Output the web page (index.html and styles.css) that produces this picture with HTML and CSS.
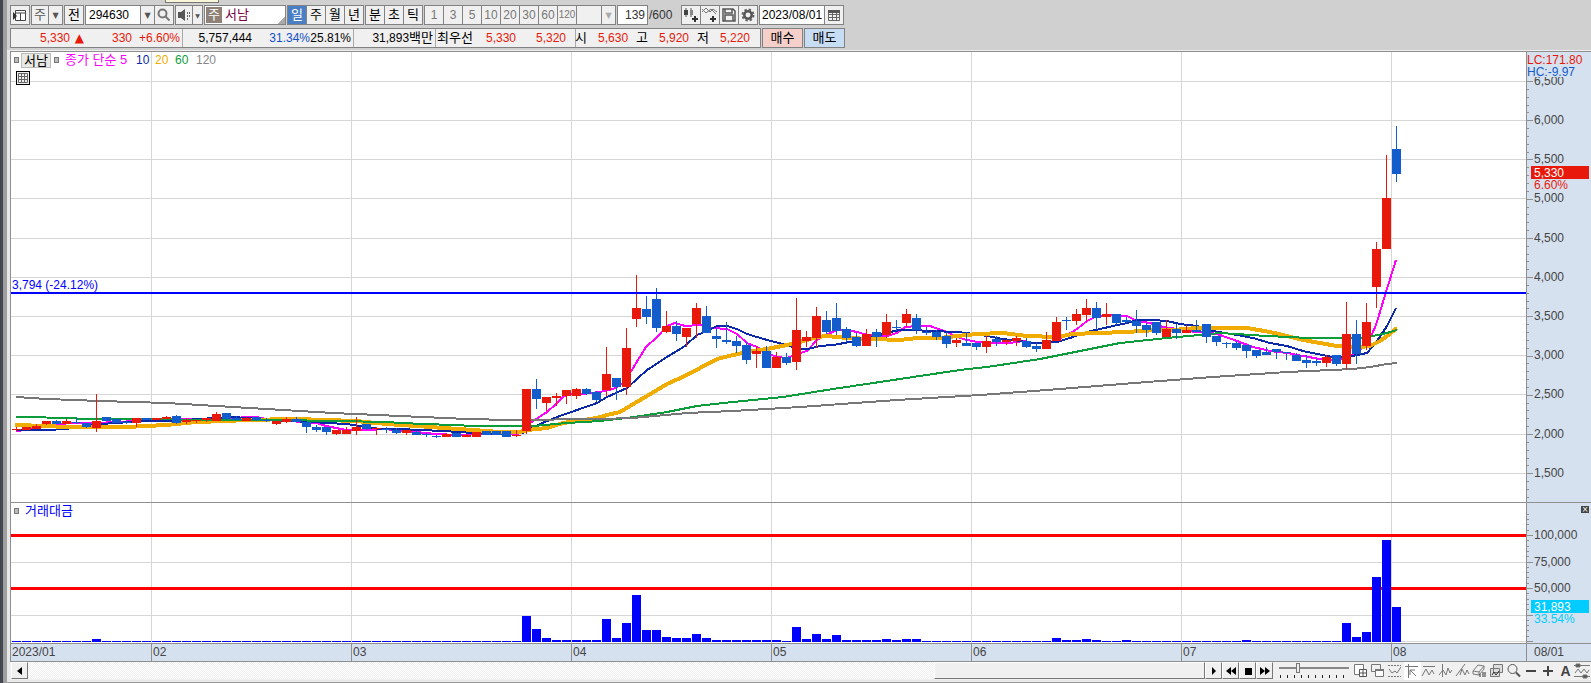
FILE: index.html
```html
<!DOCTYPE html>
<html lang="ko">
<head>
<meta charset="utf-8">
<title>서남 294630</title>
<link rel="stylesheet" href="styles.css">
</head>
<body>
<div class="edge"></div>
<main class="window">
  <header class="toolbar">
    <span class="tab-peek"></span>
    <div class="row">
      <button class="btn" aria-label="패널"><svg width="16" height="16"><path d="M3.500 3.500h10v10h-10zM3.500 6h10M8.500 6v7" fill="#fff" stroke="#444"/><path d="M1 5v8l4-4z" fill="#333"/></svg></button>
      <div class="combo"><button class="btn plain">주</button><button class="btn arrow" aria-label="열기">▼</button></div>
      <button class="btn">전</button>
      <div class="combo"><input class="field code" aria-label="종목코드" value="294630"><button class="btn arrow" aria-label="목록">▼</button><button class="btn" aria-label="검색"><svg width="16" height="16"><circle cx="6.500" cy="6.500" r="4" fill="none" stroke="#777" stroke-width="2"/><path d="M9.500 9.500l4 4" stroke="#777" stroke-width="2"/></svg></button></div>
      <div class="combo"><button class="btn plain" aria-label="소리"><svg width="16" height="16"><path d="M2 5h3l4-3v12l-4-3H2z" fill="#555"/><path d="M11 6h1M11 9h1M13 6h1M13 9h1M11 12h1" stroke="#666" stroke-width="2"/></svg></button><button class="btn arrow slim" aria-label="소리 설정">▼</button></div>
      <div class="stock"><b class="badge">주</b><span>서남</span></div>
      <div class="combo"><button class="btn on">일</button><button class="btn">주</button><button class="btn">월</button><button class="btn">년</button></div>
      <div class="combo"><button class="btn">분</button><button class="btn">초</button><button class="btn">틱</button></div>
      <div class="combo dim"><button class="btn">1</button><button class="btn">3</button><button class="btn">5</button><button class="btn">10</button><button class="btn">20</button><button class="btn">30</button><button class="btn">60</button><button class="btn small">120</button><button class="btn blank" aria-label="분 주기"></button><button class="btn arrow" aria-label="분 목록">▼</button></div>
      <div class="count"><input class="field num" aria-label="표시 개수" value="139"><span>/600</span></div>
      <div class="combo">
        <button class="btn" aria-label="차트 추가"><svg width="18" height="18"><path d="M4 2v9M9 2v9" stroke="#555"/><path d="M2 4h4v5H2z" fill="#444"/><path d="M8 4h3v5H8z" fill="#888"/><path d="M13 10v6M10 13h6" stroke="#333" stroke-width="2"/></svg></button>
        <button class="btn" aria-label="지표 추가"><svg width="18" height="18"><path d="M1 6l4-4 4 4 3-3 4 3M1 3l4 4 5-4 5 5" fill="none" stroke="#777"/><path d="M12 10v6M9 13h6" stroke="#333" stroke-width="2"/></svg></button>
        <button class="btn" aria-label="저장"><svg width="18" height="18"><path d="M3 3h10l2 2v10H3zM5 3v4h7V3M5 15V9h8v6" fill="none" stroke="#555" stroke-width="1.500"/></svg></button>
        <button class="btn" aria-label="설정"><svg width="18" height="18"><circle cx="9" cy="9" r="5.500" fill="none" stroke="#666" stroke-width="2" stroke-dasharray="2.400 1.920"/><circle cx="9" cy="9" r="3.700" fill="none" stroke="#555" stroke-width="2.500"/></svg></button>
      </div>
      <div class="combo"><input class="field date" aria-label="날짜" value="2023/08/01"><button class="btn" aria-label="달력"><svg width="16" height="16"><path d="M2.500 4.500h11v9h-11zM2.500 7.500h11M2.500 10.500h11M6.500 5v8M10.500 5v8" fill="none" stroke="#666"/><path d="M2 3h12v3H2z" fill="#555"/></svg></button></div>
    </div>
    <div class="row">
      <div class="quotes">
        <div class="cell c1"><span class="up">5,330</span><span class="tri">▲</span><span class="up">330</span><span class="up">+6.60%</span></div>
        <div class="cell c2"><span>5,757,444</span><span class="down">31.34%</span><span>25.81%</span></div>
        <div class="cell c3"><span>31,893<i>백만</i></span></div>
        <div class="cell c4"><i>최우선</i><span class="up">5,330</span><span class="up">5,320</span></div>
        <div class="cell c5"><i>시</i><span class="up">5,630</span><i>고</i><span class="up">5,920</span><i>저</i><span class="up">5,220</span></div>
      </div>
      <button class="trade buy">매수</button>
      <button class="trade sell">매도</button>
    </div>
  </header>

  <section class="chart">
    <div class="pane price">
      <svg id="price" class="plot"></svg>
      <div class="legend"><span class="dot"></span><button class="name">서남</button><span class="dot"></span><span class="m5">종가 단순 5</span><span class="m10">10</span><span class="m20">20</span><span class="m60">60</span><span class="m120">120</span></div>
      <button class="gridbtn" aria-label="데이터 표"><svg width="12" height="12"><path d="M1.500 1.500h9v9h-9zM1.500 4.500h9M1.500 7.500h9M4.500 1.500v9M7.500 1.500v9" fill="none" stroke="#666"/></svg></button>
    </div>
    <svg id="price-axis" class="axis tall"></svg>
    <div class="pane volume">
      <svg id="volume" class="plot"></svg>
      <div class="legend vol"><span class="dot"></span><span>거래대금</span></div>
    </div>
    <div class="pane volaxis">
      <svg id="volume-axis" class="axis"></svg>
      <button class="close" aria-label="닫기">×</button>
    </div>
    <svg id="time" class="time"></svg>
    <div class="today">08/01</div>
  </section>

  <footer class="bottom">
    <button class="sbtn" aria-label="왼쪽으로"><svg width="14" height="14"><path d="M9 3v8L4 7z"/></svg></button>
    <div class="track"><button class="thumb" aria-label="스크롤"></button></div>
    <div class="play">
      <button class="sbtn" aria-label="오른쪽으로"><svg width="14" height="14"><path d="M5 3v8l4-4z"/></svg></button>
      <button class="sbtn" aria-label="뒤로"><svg width="14" height="14"><path d="M7 3v8L2 7zM12 3v8L7 7z"/></svg></button>
      <button class="sbtn" aria-label="정지"><svg width="14" height="14"><path d="M4 4h7v7H4z"/></svg></button>
      <button class="sbtn" aria-label="앞으로"><svg width="14" height="14"><path d="M2 3v8l5-4zM7 3v8l5-4z"/></svg></button>
    </div>
    <div class="zoom"><input type="range" aria-label="확대" min="0" max="100" value="25"><div class="marks"></div></div>
    <div class="tools">
      <button aria-label="차트 추가"><svg width="16" height="16"><path d="M1.500 1.500h9v10h-9z" fill="#fff"/><path d="M6.500 6.500h7v7h-7zM10 6v8M6 10h8" fill="#fff" stroke="#555"/></svg></button>
      <button aria-label="차트 겹치기"><svg width="16" height="16"><path d="M1.500 1.500h9v7h-9z"/><path d="M5.500 6.500h8v7h-8z" fill="#fff"/><path d="M5 7h9" stroke-width="2"/></svg></button>
      <button aria-label="영역"><svg width="16" height="16"><path d="M1 2.500h13M1 13.500h13" stroke-dasharray="2 1"/><path d="M2 6l3 4 3-2 2 2 4-6"/></svg></button>
      <button class="sel" aria-label="십자선"><svg width="16" height="16"><path d="M1 3.500h13M4.500 1v14M6 7l6 6M6 7h5M6 7v5"/></svg></button>
      <button aria-label="수평선"><svg width="16" height="16"><path d="M2 3.500h12M1 13l4-7 3 6 3-5 2 4"/></svg></button>
      <button aria-label="수직선"><svg width="16" height="16"><path d="M4.500 1v13M1 12l4-5 3 5 2-7 2 5 2-3"/></svg></button>
      <button aria-label="추세선"><svg width="16" height="16"><path d="M1 13L10 1M5 12l2-6 3 6 2-5 2 4"/></svg></button>
      <button aria-label="모두 지우기"><svg width="16" height="16"><path d="M1 8l5-6 6 1-5 6zM1 8v3l6 1V9M7 12l5-6V3"/><path d="M8 14v-3M11 14v-5M13 14v-5" stroke="#333"/></svg></button>
      <button aria-label="이미지"><svg width="16" height="16"><path d="M4.500 1.500h9v8h-9zM1.500 5.500h9v8h-9z" fill="#ddd"/><path d="M3 12l2-3 2 3 3-4" stroke="#333"/></svg></button>
      <button aria-label="돋보기"><svg width="16" height="16"><circle cx="6.500" cy="6" r="4.500" stroke="#555"/><path d="M10 9.500l4 4" stroke="#555" stroke-width="2"/></svg></button>
      <button aria-label="축소"><svg width="16" height="16"><path d="M3 8h10" stroke="#444" stroke-width="2"/></svg></button>
      <button aria-label="확대"><svg width="16" height="16"><path d="M3 8h10M8 3v10" stroke="#444" stroke-width="2"/></svg></button>
      <button class="letter">A</button>
      <button aria-label="구성"><svg width="16" height="16"><path d="M0 2.500h16M0 13.500h16M1 10l3-4 3 4 3-4 3 4 2-3"/><path d="M2 1h4v3H2zM9 12h4v3H9z" fill="#555"/></svg></button>
    </div>
  </footer>
</main>
<script src="chart.js"></script>
</body>
</html>
```
FILE: styles.css
```css
* { box-sizing: border-box; }
body {
  margin: 0;
  display: flex;
  min-height: 100vh;
  background: #e8e8e8;
  font: 12px/16px "Liberation Sans", "Noto Sans CJK KR", sans-serif;
  color: #000;
  overflow: hidden;
}
button, input { font: inherit; color: inherit; margin: 0; padding: 0; border-radius: 0; }
i { font-style: normal; }
svg { display: block; }
.edge { width: 7px; background: #9c9c9c; border-left: 3px solid #434750; border-right: 3px solid #a0a0a0; }
.window { flex: 1; min-width: 0; display: flex; flex-direction: column; border-bottom: 1px solid #999; }

.toolbar { position: relative; height: 51px; padding: 5px 0 0 3px; background: #d0d0d0; display: flex; flex-direction: column; gap: 3px; border-bottom: 1px solid #eee; }
.tab-peek { position: absolute; left: 158px; top: 0; width: 54px; height: 3px; background: #f8f5d8; border: 1px solid #777; border-top: 0; }
.row { display: flex; gap: 1px; height: 20px; }
.combo { display: flex; }
.combo > * + * { margin-left: -1px; }
.btn { width: 20px; height: 20px; flex: none; display: flex; align-items: center; justify-content: center; background: #f0f0f0; border: 1px solid #828282; font-size: 13px; overflow: hidden; }
.btn.plain { width: 18px; color: #555; }
.btn.arrow { width: 15px; font: 8px "DejaVu Sans", sans-serif; color: #555; }
.btn.slim { width: 11px; font-size: 6px; }
.btn.on { background: #4a7fc4; color: #fff; }
.btn.blank { width: 26px; }
.dim .btn { color: #777; font-size: 12px; }
.dim .btn.small { font-size: 10px; }
.dim .btn.arrow { font-size: 8px; color: #aaa; }
.field { height: 20px; border: 1px solid #828282; background: #fff; padding: 0 3px; }
.code { width: 56px; }
.num { width: 31px; text-align: right; padding: 0 2px; }
.date { width: 66px; padding: 0 1px 0 2px; }
.stock { width: 82px; border: 1px solid #828282; background: linear-gradient(135deg, #fff 92%, #aaa 92%); display: flex; align-items: center; gap: 3px; padding-left: 1px; color: #7a0046; font-size: 13px; }
.badge { width: 16px; height: 16px; background: #8f8078; color: #fff; font-weight: 400; text-align: center; line-height: 15px; }
.count { display: flex; align-items: center; gap: 1px; width: 63px; color: #333; }

.quotes { display: flex; width: 751px; height: 20px; background: #f0f0f0; border: 1px solid #828282; }
.cell { display: flex; align-items: center; justify-content: flex-end; border-left: 1px solid #aaa; padding-right: 2px; }
.cell:first-child { border-left: 0; }
.cell span { flex: none; text-align: right; white-space: nowrap; }
.cell i { font-size: 13px; white-space: nowrap; }
.up { color: #e8190a; }
.down { color: #1250c8; }
.cell .tri { width: 14px; color: #e8190a; font: 12px/16px "DejaVu Sans", sans-serif; }
.c1 { width: 171px; }
.c1 .up { width: 48px; }
.c2 { width: 171px; }
.c2 span:first-child { width: 80px; }
.c2 span:nth-child(2) { width: 58px; }
.c2 span:last-child { width: 41px; }
.c3 { width: 82px; }
.c4 { width: 140px; padding-right: 9px; }
.c4 .up { width: 50px; }
.c4 .up:nth-child(2) { width: 43px; }
.c5 { width: 185px; padding-right: 10px; }
.c5 .up { width: 41px; margin-right: 8px; }
.c5 .up:last-child { margin-right: 0; }
.trade { width: 41px; height: 20px; border: 1px solid #828282; font-size: 13px; line-height: 16px; }
.buy { background: #f5cfca; }
.sell { background: #c6ddf4; }

.chart { display: grid; grid-template-columns: 1fr 65px; margin-left: 3px; border: 1px solid #8f8f8f; border-right: 0; background: #fff; }
.pane { position: relative; }
.plot { width: 100%; }
.price, .price .plot, .tall { height: 450px; }
.volume, .volaxis { height: 141px; border-top: 1px solid #8f8f8f; }
.volume .plot, .volaxis .axis { height: 140px; }
.axis { width: 65px; background: #d6e1ef; border-left: 1px solid #8f8f8f; }
.axis text, .time text { fill: #444; }
.time { width: 100%; height: 18px; background: #d6e1ef; border-top: 1px solid #8f8f8f; }
.today { height: 18px; padding-left: 7px; background: #d6e1ef; border-top: 1px solid #8f8f8f; border-left: 1px solid #8f8f8f; color: #444; }
.legend { position: absolute; left: 3px; top: 0; display: flex; align-items: center; height: 16px; font-size: 13px; white-space: nowrap; }
.dot { width: 5px; height: 6px; background: #bbb; border: 1px solid #777; }
.name { width: 30px; height: 15px; margin: 0 3px 0 2px; border: 1px solid #bbb; background: #e8e8e4; line-height: 13px; }
.m5 { margin-left: 6px; color: #f0f; width: 71px; }
.m10, .m20, .m60, .m120 { font-size: 12px; }
.m10 { color: #0a28a8; width: 19px; }
.m20 { color: #f0ac00; width: 20px; }
.m60 { color: #0c9c3c; width: 21px; }
.m120 { color: #888; }
.legend.vol { color: #00f; gap: 6px; }
.gridbtn { position: absolute; left: 5px; top: 19px; width: 14px; height: 14px; border: 1px solid #000; background: #eee; display: flex; align-items: center; justify-content: center; }
.close { position: absolute; right: 2px; top: 3px; width: 8px; height: 7px; border: 0; background: #444; color: #fff; font: 8px/7px "DejaVu Sans", sans-serif; }

.bottom { display: flex; height: 18px; margin-left: 3px; padding-left: 1px; background: #f0f0f0; }
.sbtn { width: 17px; height: 17px; flex: none; border: 1px solid #fff; border-right-color: #777; border-bottom-color: #777; background: #f0f0f0; display: flex; align-items: center; justify-content: center; }
.track { flex: 1; height: 17px; display: flex; justify-content: flex-end; background: repeating-conic-gradient(#f0f0f0 0 25%, #fff 0 50%) 0 0 / 2px 2px; }
.thumb { width: 23%; height: 17px; border: 1px solid #fff; border-right-color: #777; border-bottom-color: #777; background: #f0f0f0; }
.play { display: flex; }
.zoom { width: 80px; padding: 1px 4px 0 6px; }
.zoom input { display: block; width: 70px; height: 10px; appearance: none; background: linear-gradient(#888, #888) 0 4px / 100% 2px no-repeat; }
.zoom input::-webkit-slider-thumb { appearance: none; width: 4px; height: 10px; background: #eee; border: 1px solid #777; }
.marks { width: 68px; height: 3px; margin: 2px 0 0 1px; background: repeating-linear-gradient(90deg, #222 0 1px, transparent 1px 7px); }
.tools { display: flex; }
.tools button { width: 17px; height: 18px; border: 0; background: none; display: flex; align-items: center; }
.tools svg { fill: none; stroke: #777; }
.tools .sel { background: #fff; }
.tools .letter { justify-content: center; font: bold 14px "Liberation Sans", sans-serif; color: #444; }
```
FILE: chart.js
```js
// Drawing coordinates share one origin; these offsets place it in each pane.
const LEFT = 11, TOP = 52, VTOP = 503, STEP = 10, FIRST = 16;

// [rising, high, body top, body bottom, low]
const candles = [
[1,427,429,430,431],[1,427,427,430,430],[1,424,426,429,429],[1,421,421,424,425],[0,420,421,424,424],[1,419,421,424,424],[0,418,422,423,424],[0,423,423,427,428],[1,394,421,428,432],[0,417,417,421,421],
[0,419,419,423,423],[0,421,422,423,424],[1,418,418,423,427],[0,418,418,420,420],[1,418,418,420,420],[1,416,417,419,419],[0,415,416,423,424],[1,418,420,422,424],[1,420,420,421,423],[1,418,418,420,422],
[1,412,414,421,421],[0,413,413,419,420],[0,416,418,420,420],[1,417,418,421,421],[0,417,417,420,421],[0,418,420,421,422],[1,421,421,424,425],[1,417,419,422,423],[0,417,419,422,422],[0,422,422,427,433],
[0,425,427,430,432],[0,427,427,432,435],[1,430,430,434,435],[1,427,430,434,434],[1,417,427,431,435],[0,424,424,429,430],[1,427,428,429,435],[0,427,429,430,433],[0,428,430,433,434],[1,430,430,433,435],
[0,431,432,435,435],[0,433,434,435,437],[0,435,436,437,438],[1,433,434,437,437],[0,433,433,437,437],[1,434,435,437,437],[1,432,432,437,437],[0,431,431,435,435],[0,431,431,435,435],[0,431,431,437,437],
[1,430,435,436,437],[1,389,389,431,434],[0,379,389,399,409],[1,397,397,403,411],[1,393,396,398,406],[1,390,390,396,404],[1,388,389,396,399],[0,388,389,394,395],[0,391,392,400,402],[1,347,374,390,396],
[0,378,378,387,400],[1,328,348,387,395],[1,275,308,319,327],[0,296,309,317,324],[0,288,299,328,332],[1,311,326,332,333],[0,321,326,334,341],[1,328,328,337,347],[1,303,308,324,338],[0,306,316,333,333],
[0,328,336,339,348],[0,322,340,342,344],[0,336,341,346,353],[0,342,345,360,364],[1,346,351,354,368],[0,346,351,368,368],[1,352,357,368,368],[0,353,357,363,365],[1,298,330,362,370],[1,331,337,341,347],
[1,307,316,338,348],[0,311,320,332,334],[0,303,318,331,335],[0,327,329,338,342],[0,333,337,346,347],[1,329,334,346,346],[0,329,332,337,347],[1,314,322,335,338],[0,320,327,328,331],[1,309,314,323,327],
[0,314,318,330,334],[0,327,332,333,335],[0,330,332,337,340],[0,332,336,344,348],[1,338,340,343,347],[0,332,343,346,346],[0,343,343,347,350],[1,336,341,347,353],[0,336,339,342,346],[1,340,340,342,345],
[1,336,338,341,346],[0,338,341,347,348],[0,343,346,349,352],[1,332,340,349,349],[1,317,322,341,341],[0,317,320,321,330],[1,309,314,321,325],[1,299,308,315,321],[0,302,308,318,330],[1,303,314,317,325],
[0,314,314,323,325],[0,317,320,322,323],[0,310,321,326,333],[0,323,325,330,337],[0,322,322,333,335],[1,320,329,337,337],[0,324,329,333,339],[1,325,330,333,333],[0,320,330,332,332],[0,324,324,337,343],
[0,336,336,342,346],[0,342,343,344,348],[0,341,343,348,350],[0,345,345,351,358],[0,350,350,356,358],[0,347,352,355,355],[0,349,349,352,359],[0,352,352,353,360],[0,353,355,361,361],[0,355,360,363,368],
[0,359,361,363,366],[1,355,357,363,367],[0,355,355,364,366],[1,302,334,364,369],[0,320,334,354,364],[1,303,322,346,350],[1,242,249,287,308],[1,155,198,249,249],[0,126,149,174,182]];

const averages = [
["#f0f", 2, "16,431 26,430 36,429 46,426 56,424 76,423 96,423 116,422 136,421 156,420 186,419 206,420 226,419 246,417 256,417 266,419 286,421 306,422 316,423 326,426 336,428 346,430 366,430 386,429 406,432 416,432 436,434 456,435 476,434 506,434 518,434 530,423 547,412 555,405 563,397 570,394 582,394 600,392 613,389 622,384 630,373 646,347 657,337 667,326 675,323 685,326 700,325 713,328 727,329 737,334 747,343 757,347 767,353 777,357 787,358 797,354 807,351 817,340 828,334 837,330 847,330 857,332 867,335 887,336 897,333 905,327 917,326 930,326 947,332 953,335 963,339 977,342 990,343 1010,343 1023,341 1033,343 1047,343 1057,340 1067,335 1077,329 1087,321 1097,316 1110,315 1127,316 1137,321 1150,323 1163,327 1177,329 1187,331 1197,332 1207,332 1220,335 1237,341 1253,347 1270,351 1287,353 1303,356 1320,359 1337,360 1347,357 1357,353 1367,343 1372,334 1376,325 1386,292 1396,260"],
["#0a28a8", 2, "16,430 46,430 66,429 86,426 100,424 117,423 143,421 167,421 200,419 230,417 250,418 267,420 287,421 313,422 327,423 347,424 367,427 380,429 400,429 420,430 443,431 473,433 500,434 523,433 540,424 557,417 577,410 597,403 607,397 627,388 637,379 647,370 667,357 685,346 697,335 707,331 717,326 727,326 737,329 747,334 767,340 787,345 797,349 808,349 820,346 833,345 850,342 863,339 880,335 890,332 900,330 913,330 930,331 957,332 967,333 987,336 1003,339 1020,341 1033,343 1057,342 1070,338 1087,332 1100,329 1113,326 1127,323 1137,320 1153,320 1167,321 1180,324 1197,326 1213,331 1237,335 1253,338 1270,343 1287,346 1303,351 1317,354 1333,357 1347,357 1357,355 1367,353 1377,341 1387,326 1396,308"],
["#f0ac00", 4, "15,425 46,426 66,427 126,427 146,426 166,425 196,422 226,421 246,420 296,419 326,420 356,421 376,423 400,425 417,426 443,428 473,430 500,432 520,432 527,430 547,428 563,423 577,421 597,418 607,415 620,412 630,406 647,396 667,384 687,375 700,368 717,359 733,355 747,352 767,349 787,345 800,342 817,337 827,336 847,338 873,339 900,340 917,338 940,338 957,336 977,334 1003,333 1027,336 1057,337 1073,334 1097,333 1127,332 1157,330 1173,330 1197,328 1247,328 1270,332 1287,336 1303,340 1320,343 1337,346 1360,347 1370,346 1380,341 1387,336 1397,328"],
["#0c9c3c", 2, "16,417 76,418 77,419 277,420 337,421 387,422 400,423 477,426 533,426 567,423 600,421 627,418 667,412 697,406 733,402 783,397 833,389 900,379 913,377 960,370 987,367 1040,359 1080,351 1120,343 1167,338 1200,335 1220,333 1267,336 1310,338 1363,338 1387,333 1397,330"],
["#777", 2, "16,397 47,399 100,401 167,403 233,407 333,413 400,416 467,419 510,420 600,419 633,418 687,413 733,411 800,407 897,400 980,395 1047,390 1147,382 1213,377 1287,372 1353,369 1370,367 1387,364 1397,363"]];

// Bar heights that stand above the one-pixel minimum, by day index.
const bars = {8:3,51:26,52:13,53:4,54:2,55:2,56:2,57:2,58:2,59:23,60:4,61:19,62:47,63:12,64:12,65:5,66:4,67:4,68:8,69:4,70:2,71:2,72:2,73:2,74:2,75:2,76:2,78:15,79:3,80:8,81:3,82:7,83:2,84:2,85:2,86:2,87:3,88:2,89:3,90:3,104:4,105:2,106:2,107:3,108:2,111:2,123:2,133:19,134:5,135:10,136:65,137:102,138:35};

const months = [[151,"02"],[351,"03"],[571,"04"],[771,"05"],[971,"06"],[1181,"07"],[1391,"08"]];
const levels = [[81,"6,500"],[120,"6,000"],[159,"5,500"],[198,"5,000"],[238,"4,500"],[277,"4,000"],[316,"3,500"],[355,"3,000"],[394,"2,500"],[434,"2,000"],[473,"1,500"]];
const volumes = [[535,"100,000"],[562,"75,000"],[588,"50,000"],[615,""],[641,""]];

const rect = (x, y, w, h, fill) => `<rect x="${x}" y="${y}" width="${w}" height="${h}" fill="${fill}"/>`;
const text = (x, y, s, fill) => `<text x="${x}" y="${y}"${fill ? ` style="fill:${fill}"` : ""}>${s}</text>`;
const put = (id, s) => { document.getElementById(id).innerHTML = s; };
const verticals = months.map(m => rect(m[0] - LEFT, 0, 1, "100%", "#d6d6d6")).join("");

let s = verticals + levels.map(l => rect(0, l[0] - TOP, "100%", 1, "#d6d6d6")).join("");
s += `<g transform="translate(${-LEFT} ${-TOP})" shape-rendering="crispEdges">`;
for (const [c, w, pts] of averages) {
  s += `<polyline points="${pts}" fill="none" stroke="${c}" stroke-width="${w}"/>`;
}
candles.forEach(([up, hi, top, bot, lo], i) => {
  const x = FIRST + i * STEP, c = up ? "#e8190a" : "#125ccc";
  s += rect(x, hi, 1, lo - hi, c) + rect(x - 4, top, 9, bot - top, c);
});
s += "</g>" + rect(0, 292 - TOP, "100%", 2, "#00f") + text(1, 289 - TOP, "3,794 (-24.12%)", "#00f");
put("price", s);

s = verticals + volumes.map(l => rect(0, l[0] - VTOP, "100%", 1, "#d6d6d6")).join("");
s += rect(0, 534 - VTOP, "100%", 3, "#f00") + rect(0, 587 - VTOP, "100%", 3, "#f00");
candles.forEach((_, i) => {
  const h = bars[i] || 1;
  s += rect(FIRST + i * STEP - 4 - LEFT, 642 - VTOP - h, 9, h, "#00f");
});
put("volume", s);

s = "";
for (let p = 1200; p <= 6800; p += 100) {
  s += rect(0, Math.round(81 + (6500 - p) * 0.07844) - TOP, p % 500 ? 2 : 6, 1, "#8f8f8f");
}
s += levels.map(l => text(7, l[0] + 4 - TOP, l[1])).join("");
s += rect(0, 0, 64, 25, "#d6e1ef") + text(0, 12, "LC:171.80", "#e8190a") + text(0, 24, "HC:-9.97", "#125ccc");
s += rect(4, 166 - TOP, 58, 13, "#e8190a") + text(7, 177 - TOP, "5,330", "#fff") + text(7, 189 - TOP, "6.60%", "#e8190a");
put("price-axis", s);

s = "";
for (let k = 0; k <= 24; k++) {
  s += rect(0, Math.round(641 - k * 5.3) - VTOP, k % 5 ? 2 : 6, 1, "#8f8f8f");
}
s += volumes.map(l => text(7, l[0] + 4 - VTOP, l[1])).join("");
s += rect(4, 600 - VTOP, 58, 13, "#0cf") + text(7, 611 - VTOP, "31,893", "#fff") + text(7, 623 - VTOP, "33.54%", "#0cf");
put("volume-axis", s);

put("time", text(1, 12, "2023/01") + months.map(m => rect(m[0] - LEFT, 0, 1, 17, "#8f8f8f") + text(m[0] - LEFT + 2, 12, m[1])).join(""));
```
